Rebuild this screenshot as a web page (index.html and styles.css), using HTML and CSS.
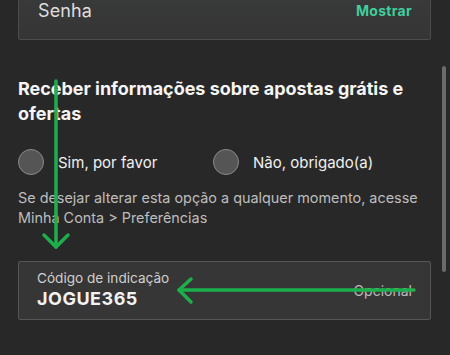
FILE: index.html
```html
<!DOCTYPE html>
<html lang="pt">
<head>
<meta charset="utf-8">
<link rel="stylesheet" href="styles.css">
</head>
<body>
<div class="page">
  <div class="field field-top">
    <span class="field-placeholder">Senha</span>
    <span class="field-action">Mostrar</span>
  </div>

  <h2 class="heading">Receber informações sobre apostas grátis e ofertas</h2>

  <div class="radios">
    <label class="radio"><span class="radio-dot"></span><span class="radio-label">Sim, por favor</span></label>
    <label class="radio"><span class="radio-dot"></span><span class="radio-label">Não, obrigado(a)</span></label>
  </div>

  <p class="help">Se desejar alterar esta opção a qualquer momento, acesse Minha Conta &gt; Preferências</p>

  <div class="field field-code">
    <div class="code-text">
      <span class="code-label">Código de indicação</span>
      <span class="code-value">JOGUE365</span>
    </div>
    <span class="code-optional">Opcional</span>
  </div>

  <div class="scrollbar"></div>

  <svg class="arrows" width="450" height="355" viewBox="0 0 450 355">
    <g fill="none" stroke="#1bb04c" stroke-width="3.5" stroke-linecap="round" stroke-linejoin="round">
      <path d="M56 81 V247"/>
      <path d="M44 235 L56 247 L68 235"/>
      <path d="M414 290 H179"/>
      <path d="M191 279 L179 290 L191 302"/>
    </g>
  </svg>
</div>
</body>
</html>
```

FILE: styles.css
```css
* { box-sizing: border-box; }
html, body {
  margin: 0;
  padding: 0;
  background: #282828;
  height: 355px;
  overflow: hidden;
}
body {
  font-family: Inter, "Noto Sans", "Liberation Sans", sans-serif;
  color: #f2f2f2;
}
.page {
  position: relative;
  display: flow-root;
  width: 450px;
  height: 355px;
  padding: 0 19px 0 18px;
}
.field {
  display: flex;
  align-items: center;
  justify-content: space-between;
  height: 59px;
  background: #353535;
  border: 1px solid #4c4c4c;
  border-radius: 2px;
}
.field-top {
  margin-top: -19px;
  padding: 0 18px 0 19px;
  background: linear-gradient(#3a3b3b, #353535);
}
.field-placeholder {
  font-size: 18px;
  color: #dedede;
  letter-spacing: 0.1px;
  margin-bottom: 1px;
}
.field-action {
  font-size: 14px;
  font-weight: 700;
  color: #3ecf9c;
  letter-spacing: 0.3px;
}
.heading {
  margin: 36px 0 0;
  font-size: 18px;
  line-height: 25px;
  font-weight: 700;
  color: #f5f5f5;
  letter-spacing: -0.03px;
}
.radios {
  display: flex;
  margin-top: 23px;
}
.radio {
  display: flex;
  align-items: center;
  width: 195px;
}
.radio-dot {
  width: 26px;
  height: 26px;
  border-radius: 50%;
  background: #555555;
  border: 1.5px solid #8a8a8a;
  flex: none;
}
.radio-label {
  margin-left: 14px;
  font-size: 15px;
  color: #f0f0f0;
}
.help {
  margin: 13px 0 0;
  font-size: 14.4px;
  line-height: 20px;
  color: #bdbdbd;
}
.field-code {
  margin-top: 33px;
  height: 59px;
  padding: 0 18px;
  background: #363636;
  border-color: #555;
}
.code-text {
  display: flex;
  flex-direction: column;
  margin-top: -1px;
}
.code-label {
  font-size: 13.6px;
  line-height: 18px;
  color: #d0d0d0;
}
.code-value {
  font-size: 18px;
  line-height: 24px;
  font-weight: 700;
  color: #f2f2f2;
  letter-spacing: 0.5px;
}
.code-optional {
  font-size: 14px;
  color: #bbbbbb;
}
.scrollbar {
  position: absolute;
  left: 442px;
  top: 66px;
  width: 4px;
  height: 206px;
  border-radius: 2px;
  background: #6b6b6b;
}
.arrows {
  position: absolute;
  left: 0;
  top: 0;
  pointer-events: none;
}
```
